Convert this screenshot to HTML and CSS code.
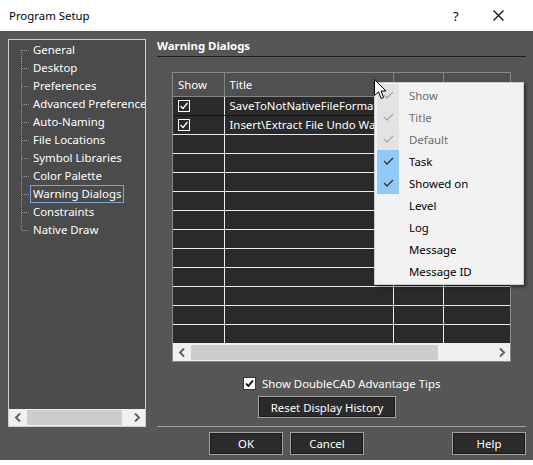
FILE: index.html
```html
<!DOCTYPE html>
<html lang="en">
<head>
    <meta charset="UTF-8">
    <title>Program Setup</title>
    <link rel="stylesheet" href="styles.css">
</head>
<body>

<div class="window">
    <!-- title bar -->
    <div class="titlebar">
        <span class="title">Program Setup</span>
        <span class="help">?</span>
        <svg class="close" width="11" height="11" viewBox="0 0 11 11">
            <path d="M0.5 0.5 L10.5 10.5 M10.5 0.5 L0.5 10.5" stroke="#000" stroke-width="1.1"/>
        </svg>
    </div>

    <div class="dialog">
        <!-- left tree -->
        <div class="tree-panel">
            <ul class="tree">
                <li><span class="label">General</span></li>
                <li><span class="label">Desktop</span></li>
                <li><span class="label">Preferences</span></li>
                <li><span class="label">Advanced Preferences</span></li>
                <li><span class="label">Auto-Naming</span></li>
                <li><span class="label">File Locations</span></li>
                <li><span class="label">Symbol Libraries</span></li>
                <li><span class="label">Color Palette</span></li>
                <li><span class="label selected">Warning Dialogs</span></li>
                <li><span class="label">Constraints</span></li>
                <li><span class="label">Native Draw</span></li>
            </ul>
            <div class="hscroll">
                <span class="sb-btn">
                    <svg width="8" height="9" viewBox="0 0 8 9"><path d="M6 0.5 L2 4.5 L6 8.5" fill="none" stroke="#606060" stroke-width="2"/></svg>
                </span>
                <span class="sb-thumb tree-thumb"></span>
                <span class="sb-track"></span>
                <span class="sb-btn">
                    <svg width="8" height="9" viewBox="0 0 8 9"><path d="M2 0.5 L6 4.5 L2 8.5" fill="none" stroke="#606060" stroke-width="2"/></svg>
                </span>
            </div>
        </div>

        <!-- right page -->
        <div class="pane">
            <div class="pane-title">Warning Dialogs</div>

            <div class="grid-frame">
                <table class="grid">
                    <colgroup>
                        <col class="c-show"><col class="c-title"><col class="c-3"><col class="c-4">
                    </colgroup>
                    <thead>
                        <tr><th>Show</th><th>Title</th><th></th><th></th></tr>
                    </thead>
                    <tbody id="rows"></tbody>
                </table>
                <div class="hscroll">
                    <span class="sb-btn">
                        <svg width="8" height="9" viewBox="0 0 8 9"><path d="M6 0.5 L2 4.5 L6 8.5" fill="none" stroke="#606060" stroke-width="2"/></svg>
                    </span>
                    <span class="sb-thumb grid-thumb"></span>
                    <span class="sb-track"></span>
                    <span class="sb-btn">
                        <svg width="8" height="9" viewBox="0 0 8 9"><path d="M2 0.5 L6 4.5 L2 8.5" fill="none" stroke="#606060" stroke-width="2"/></svg>
                    </span>
                </div>
            </div>

            <label class="tips">
                <svg class="tips-box" width="13" height="13" viewBox="0 0 13 13">
                    <rect x="0.5" y="0.5" width="12" height="12" fill="#fff" stroke="#333"/>
                    <path d="M3 6.5 L5.3 9 L10 3.5" fill="none" stroke="#000" stroke-width="1.8"/>
                </svg>
                Show DoubleCAD Advantage Tips
            </label>

            <button class="btn reset">Reset Display History</button>

            <div class="separator"></div>

            <div class="buttons">
                <button class="btn ok">OK</button>
                <button class="btn cancel">Cancel</button>
                <button class="btn">Help</button>
            </div>
        </div>

        <!-- column chooser popup -->
        <div class="menu">
            <div class="item disabled checked"><span class="check"><svg width="11" height="8" viewBox="0 0 11 8"><path d="M1 4 L4 7 L10 1" fill="none" stroke="#a9a9a9" stroke-width="1.3"/></svg></span>Show</div>
            <div class="item disabled checked"><span class="check"><svg width="11" height="8" viewBox="0 0 11 8"><path d="M1 4 L4 7 L10 1" fill="none" stroke="#a9a9a9" stroke-width="1.3"/></svg></span>Title</div>
            <div class="item disabled checked"><span class="check"><svg width="11" height="8" viewBox="0 0 11 8"><path d="M1 4 L4 7 L10 1" fill="none" stroke="#a9a9a9" stroke-width="1.3"/></svg></span>Default</div>
            <div class="item on"><span class="check"><svg width="11" height="8" viewBox="0 0 11 8"><path d="M1 4 L4 7 L10 1" fill="none" stroke="#333" stroke-width="1.3"/></svg></span>Task</div>
            <div class="item on"><span class="check"><svg width="11" height="8" viewBox="0 0 11 8"><path d="M1 4 L4 7 L10 1" fill="none" stroke="#333" stroke-width="1.3"/></svg></span>Showed on</div>
            <div class="item"><span class="check"></span>Level</div>
            <div class="item"><span class="check"></span>Log</div>
            <div class="item"><span class="check"></span>Message</div>
            <div class="item"><span class="check"></span>Message ID</div>
        </div>

        <svg class="cursor" width="13" height="21" viewBox="0 0 13 21">
            <path d="M0.5 0.5 L0.5 16.5 L4.5 12.8 L7.2 19.5 L9.6 18.5 L7 12 L12 12 Z" fill="#fff" stroke="#000" stroke-width="1"/>
        </svg>
    </div>
</div>

<script>
    // warning list, remaining rows are empty
    const warnings = [
        'SaveToNotNativeFileFormat',
        'Insert\\Extract File Undo Warning'
    ];
    const tbody = document.getElementById('rows');
    const check = '<svg width="12" height="12" viewBox="0 0 12 12"><rect x="0.5" y="0.5" width="11" height="11" fill="none" stroke="#fff"/><path d="M2.5 6 L5 8.5 L9.5 3" fill="none" stroke="#fff" stroke-width="1.3"/></svg>';

    for (let i = 0; i < 13; i++) {
        const tr = document.createElement('tr');
        if (i < warnings.length) tr.className = 'filled';
        const title = warnings[i] || '';
        tr.innerHTML = '<td class="cb">' + (title ? check : '') + '</td><td>' + title + '</td><td></td><td></td>';
        tbody.appendChild(tr);
    }
</script>

</body>
</html>
```

FILE: styles.css
```css
/* page */
body {
    margin: 0;
    background: #fff;
    font-family: 'Noto Sans', sans-serif;
    font-size: 11.4px;
}

.window {
    width: 533px;
}

/* title bar */
.titlebar {
    height: 31px;
    display: flex;
    align-items: center;
    background: #fff;
    color: #000;
}

.title {
    margin-left: 9px;
    flex: 1;
}

.help {
    width: 12px;
    margin-right: 28px;
    font-size: 13px;
}

.close {
    margin-right: 29px;
}

/* dialog body */
.dialog {
    position: relative;
    height: 429px;
    box-sizing: border-box;
    padding: 8px 7px 0 8px;
    display: flex;
    gap: 11px;
    background: #565656;
    color: #fff;
}

/* tree */
.tree-panel {
    width: 138px;
    height: 388px;
    box-sizing: border-box;
    border: 1px solid #cfcfcf;
    background: #4b4b4b;
    display: flex;
    flex-direction: column;
    overflow: hidden;
}

.tree {
    list-style: none;
    margin: 0;
    padding: 1px 0 0 12px;
    flex: 1;
}

.tree li {
    height: 18px;
    display: flex;
    align-items: center;
    white-space: nowrap;
}

.tree li::before {
    content: "";
    width: 9px;
    align-self: stretch;
    flex: none;
    background-image:
        repeating-linear-gradient(to bottom, #9a9a9a 0 1px, transparent 1px 2px),
        repeating-linear-gradient(to right, #9a9a9a 0 1px, transparent 1px 2px);
    background-size: 1px 100%, 9px 1px;
    background-position: 0 0, 1px 9px;
    background-repeat: no-repeat;
}

.tree li:first-child::before {
    background-size: 1px 50%, 9px 1px;
    background-position: 0 100%, 1px 9px;
}

.tree li:last-child::before {
    background-size: 1px 50%, 9px 1px;
    background-position: 0 0, 1px 9px;
}

.label {
    height: 16px;
    line-height: 16px;
    padding: 0 2px;
    border: 1px solid transparent;
}

.label.selected {
    border-color: #7ea2d6;
}

/* horizontal scrollbars */
.hscroll {
    height: 17px;
    display: flex;
    background: #f0f0f0;
    flex: none;
}

.sb-btn {
    width: 17px;
    display: flex;
    align-items: center;
    justify-content: center;
}

.sb-thumb {
    background: #cdcdcd;
    margin: 1px 0;
}

.tree-thumb {
    width: 95px;
    margin-left: 1px;
}

.grid-thumb {
    width: 247px;
    margin-left: 1px;
}

.sb-track {
    flex: 1;
}

/* right pane */
.pane {
    width: 369px;
    display: flex;
    flex-direction: column;
}

.pane-title {
    font-weight: bold;
    line-height: 14px;
    padding-bottom: 3px;
    border-bottom: 1px solid #1e1e1e;
}

.grid-frame {
    margin: 15px 0 0 15px;
    width: 339px;
    box-sizing: border-box;
    border: 1px solid #8a8a8a;
    background: #2a2a2a;
}

.grid {
    width: 337px;
    table-layout: fixed;
    border-collapse: collapse;
}

.c-show { width: 51px; }
.c-title { width: 169px; }
.c-3 { width: 50px; }
.c-4 { width: 67px; }

.grid th {
    height: 23px;
    padding: 0 0 0 5px;
    text-align: left;
    font-weight: normal;
    background: #505050;
    border: 1px solid #858585;
    border-top: none;
    white-space: nowrap;
}

.grid th:first-child { border-left: none; }
.grid th:last-child { border-right: none; }

.grid td {
    height: 18px;
    padding: 0 0 0 5px;
    border-right: 1px solid #ececec;
    border-bottom: 1px solid #ececec;
    white-space: nowrap;
    overflow: hidden;
    line-height: 16px;
}

.grid td:last-child { border-right: none; }

.grid tr.filled:first-child td {
    border-bottom-color: #111;
}

.grid td.cb svg {
    display: block;
}

/* tips + buttons */
.tips {
    margin: 13px 0 0 86px;
    height: 16px;
    display: flex;
    align-items: center;
    gap: 6px;
}

.btn {
    font-family: 'Noto Sans', sans-serif;
    font-size: 11.4px;
    color: #fff;
    background: #2b2b2b;
    border: 1px solid #a2a2a2;
    box-shadow: inset 0 0 0 1px #1a1a1a;
    padding: 0;
}

.reset {
    margin: 5px 0 0 101px;
    width: 138px;
    height: 22px;
}

.separator {
    margin-top: 8px;
    height: 1px;
    background: #a0a0a0;
}

.buttons {
    margin-top: 5px;
    display: flex;
    justify-content: flex-end;
    gap: 7px;
}

.buttons .btn {
    width: 74px;
    height: 23px;
}

.buttons .cancel {
    margin-right: 81px;
}

/* popup menu */
.menu {
    position: absolute;
    left: 374px;
    top: 51px;
    width: 150px;
    box-sizing: border-box;
    padding: 1px 2px 2px;
    background: #f2f2f2;
    border: 1px solid #cccccc;
    box-shadow: 2px 2px 3px rgba(0, 0, 0, 0.45);
    color: #000;
}

.item {
    height: 22px;
    display: flex;
    align-items: center;
    gap: 10px;
}

.check {
    width: 22px;
    height: 22px;
    display: flex;
    align-items: center;
    justify-content: center;
}

.item.disabled {
    color: #6d6d6d;
}

.item.disabled .check {
    background: #e3e3e3;
}

.item.on .check {
    background: #91c9f7;
}

.cursor {
    position: absolute;
    left: 374px;
    top: 48px;
}
```
